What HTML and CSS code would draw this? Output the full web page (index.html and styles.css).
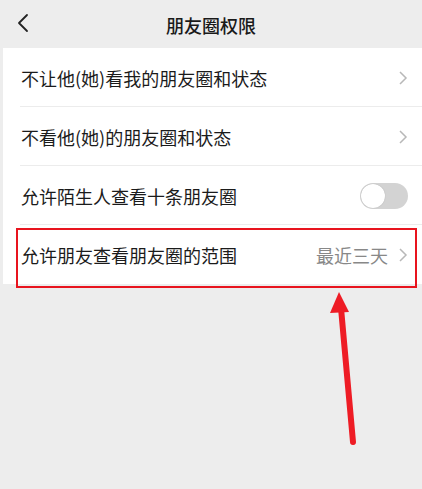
FILE: index.html
```html
<!DOCTYPE html>
<html lang="zh-CN">
<head>
<meta charset="utf-8">
<title>朋友圈权限</title>
<link rel="stylesheet" href="styles.css">
</head>
<body>
<div class="page">
  <header class="nav">
    <svg class="back" width="12" height="20" viewBox="0 0 12 20"><path d="M10 2 L2 10 L10 18" fill="none" stroke="#222" stroke-width="1.8" stroke-linecap="round" stroke-linejoin="round"/></svg>
    <div class="title">朋友圈权限</div>
  </header>
  <div class="list">
    <div class="row">
      <span class="label">不让他(她)看我的朋友圈和状态</span>
      <svg class="chev" width="10" height="16" viewBox="0 0 10 16"><path d="M2 2 L8 8 L2 14" fill="none" stroke="#b8b8b8" stroke-width="1.5"/></svg>
    </div>
    <div class="row">
      <span class="label">不看他(她)的朋友圈和状态</span>
      <svg class="chev" width="10" height="16" viewBox="0 0 10 16"><path d="M2 2 L8 8 L2 14" fill="none" stroke="#b8b8b8" stroke-width="1.5"/></svg>
    </div>
    <div class="row">
      <span class="label">允许陌生人查看十条朋友圈</span>
      <span class="toggle"><span class="knob"></span></span>
    </div>
    <div class="row last">
      <span class="label">允许朋友查看朋友圈的范围</span>
      <span class="value">最近三天</span>
      <svg class="chev" width="10" height="16" viewBox="0 0 10 16"><path d="M2 2 L8 8 L2 14" fill="none" stroke="#b8b8b8" stroke-width="1.5"/></svg>
    </div>
  </div>
  <div class="highlight"></div>
  <svg class="arrow" width="422" height="489" viewBox="0 0 422 489">
    <line x1="353" y1="442" x2="341" y2="308" stroke="#ee1c25" stroke-width="6" stroke-linecap="round"/>
    <polygon points="339,292 330,313 349,312" fill="#ee1c25"/>
  </svg>
</div>
</body>
</html>
```
FILE: styles.css
```css
* { box-sizing: border-box; }
html, body {
  margin: 0;
  padding: 0;
  background: #ededed;
}
body {
  font-family: "Noto Sans CJK SC", "Noto Sans", sans-serif;
  color: #1b1b1b;
}
.page {
  position: relative;
  width: 422px;
  height: 489px;
  overflow: hidden;
}
.nav {
  height: 48px;
  display: flex;
  align-items: center;
  justify-content: center;
  position: relative;
}
.back {
  position: absolute;
  left: 17px;
  top: 13px;
}
.title {
  font-size: 18px;
  font-weight: 500;
  color: #1a1a1a;
  margin-top: 2px;
}
.list {
  margin-left: 3px;
  background: #fff;
}
.row {
  height: 59px;
  display: flex;
  align-items: center;
  padding: 0 14px 0 18px;
  position: relative;
  font-size: 18px;
}
.row::after {
  content: "";
  position: absolute;
  left: 17px;
  right: 0;
  bottom: 0;
  height: 1px;
  background: #ececec;
}
.row.last::after { display: none; }
.label {
  flex: 1;
  color: #1b1b1b;
}
.value {
  color: #888;
  font-size: 18px;
  margin-right: 10px;
}
.chev {
  display: block;
}
.toggle {
  width: 48px;
  height: 26px;
  border-radius: 13px;
  background: #d3d3d3;
  position: relative;
}
.knob {
  position: absolute;
  left: 1px;
  top: 1px;
  width: 24px;
  height: 24px;
  border-radius: 50%;
  background: #fff;
  box-shadow: 0 0 1px rgba(0,0,0,0.25);
}
.highlight {
  position: absolute;
  left: 16px;
  top: 228px;
  width: 401px;
  height: 60px;
  border: 2px solid #e8141e;
}
.arrow {
  position: absolute;
  left: 0;
  top: 0;
}
```
